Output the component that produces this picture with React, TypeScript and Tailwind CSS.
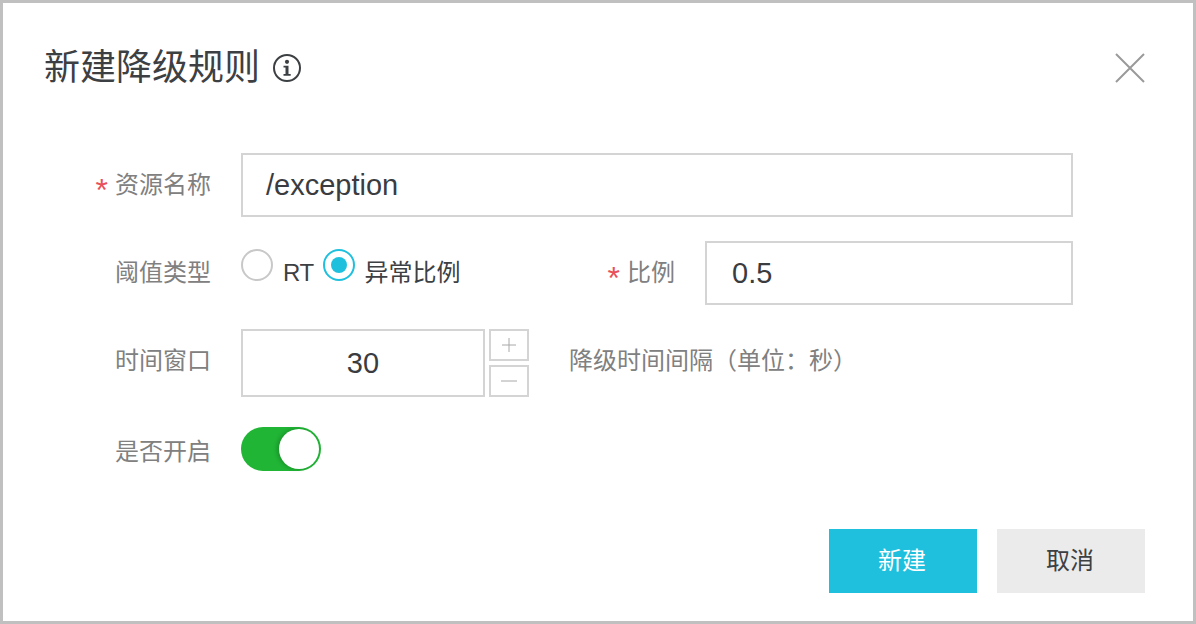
const font = {
  fontFamily: '"Liberation Sans", "Noto Sans CJK SC", sans-serif',
};

function Label({ text, required }: { text: string; required?: boolean }) {
  return (
    <div className="flex items-center justify-end gap-[7px] text-[24px] leading-[32px] text-[#808080]">
      {required ? <span className="mt-[10px] text-[32px] leading-[24px] text-[#e8505b]">*</span> : null}
      <span>{text}</span>
    </div>
  );
}

function InfoIcon() {
  return (
    <svg width="30" height="30" viewBox="0 0 30 30" fill="none" className="shrink-0">
      <circle cx="15" cy="15" r="13" stroke="#3d4043" strokeWidth="2" />
      <circle cx="15" cy="8.8" r="2.1" fill="#3d4043" />
      <path d="M11.5 12.8h5v8.2h2.2v1.7h-7.2V21h2v-6.5h-2z" fill="#3d4043" />
    </svg>
  );
}

function Radio({ checked }: { checked?: boolean }) {
  return (
    <span
      className={
        checked
          ? "flex h-[32px] w-[32px] items-center justify-center rounded-full border-2 border-[#1fc0de]"
          : "h-[32px] w-[32px] rounded-full border-2 border-[#c8c8c8]"
      }
    >
      {checked ? <span className="h-[16px] w-[16px] rounded-full bg-[#1fc0de]" /> : null}
    </span>
  );
}

export default function App() {
  return (
    <div
      style={font}
      className="box-border flex h-[624px] w-[1196px] flex-col border-[3px] border-[#c0c0c0] bg-white"
    >
      <header className="flex items-center justify-between pl-[41px] pr-[48px] pt-[41px]">
        <div className="flex items-center gap-[12px]">
          <h1 className="text-[36px] font-normal leading-[48px] text-[#3d4043]">新建降级规则</h1>
          <InfoIcon />
        </div>
        <svg width="30" height="30" viewBox="0 0 30 30" fill="none">
          <path d="M1 1l28 28M29 1L1 29" stroke="#9a9a9a" strokeWidth="2" />
        </svg>
      </header>

      <div className="mt-[61px] flex flex-col">
        <div className="flex items-center">
          <div className="w-[208px]">
            <Label text="资源名称" required />
          </div>
          <div className="ml-[30px] box-border flex h-[64px] w-[832px] items-center border-2 border-[#d4d4d4] pl-[23px] pt-[2px] text-[29px] text-[#3a3c3f]">
            /exception
          </div>
        </div>

        <div className="mt-[24px] flex h-[64px] items-center">
          <div className="w-[208px]">
            <Label text="阈值类型" />
          </div>
          <div className="ml-[30px] flex items-start self-start pt-[8px]">
            <Radio />
            <span className="ml-[10px] mt-[8px] text-[24px] leading-[32px] tracking-[-0.5px] text-[#3d4043]">RT</span>
            <span className="ml-[9px]">
              <Radio checked />
            </span>
            <span className="ml-[10px] mt-[8px] text-[24px] leading-[32px] text-[#3d4043]">异常比例</span>
          </div>
          <div className="ml-[147px]">
            <Label text="比例" required />
          </div>
          <div className="ml-[30px] box-border flex h-[64px] w-[368px] items-center border-2 border-[#d4d4d4] pl-[25px] pt-[2px] text-[29px] text-[#3a3c3f]">
            0.5
          </div>
        </div>

        <div className="mt-[24px] flex items-center">
          <div className="w-[208px] pb-[4px]">
            <Label text="时间窗口" />
          </div>
          <div className="ml-[30px] box-border flex h-[68px] w-[244px] items-center justify-center border-2 border-[#d4d4d4] pt-[2px] text-[29px] text-[#3a3c3f]">
            30
          </div>
          <div className="ml-[4px] flex flex-col gap-[4px]">
            <div className="box-border flex h-[32px] w-[40px] items-center justify-center border-2 border-[#d4d4d4]">
              <svg width="16" height="16" viewBox="0 0 16 16" fill="none">
                <path d="M1 8h14M8 1v14" stroke="#a8a8a8" strokeWidth="1" />
              </svg>
            </div>
            <div className="box-border flex h-[32px] w-[40px] items-center justify-center border-2 border-[#d4d4d4]">
              <svg width="16" height="16" viewBox="0 0 16 16" fill="none">
                <path d="M0 8h16" stroke="#a8a8a8" strokeWidth="1" />
              </svg>
            </div>
          </div>
          <span className="ml-[40px] pb-[4px] text-[24px] leading-[32px] text-[#808080]">
            降级时间间隔（单位：秒）
          </span>
        </div>

        <div className="mt-[30px] flex items-center">
          <div className="w-[208px] pt-[6px]">
            <Label text="是否开启" />
          </div>
          <div className="ml-[30px] box-border flex h-[44px] w-[80px] items-center justify-end rounded-full bg-[#20b535] p-[2px]">
            <span className="h-[40px] w-[40px] rounded-full bg-white shadow-[-2px_0_4px_rgba(0,0,0,0.2)]" />
          </div>
        </div>
      </div>

      <footer className="mt-[58px] flex justify-end gap-[20px] pr-[48px]">
        <button type="button" className="h-[64px] w-[148px] bg-[#1fc0de] pr-[2px] text-[24px] text-white">
          新建
        </button>
        <button type="button" className="h-[64px] w-[148px] bg-[#ebebeb] pr-[2px] text-[24px] text-[#3d4043]">
          取消
        </button>
      </footer>
    </div>
  );
}
